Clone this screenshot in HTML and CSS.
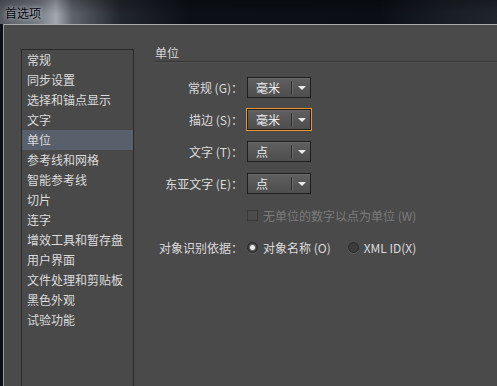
FILE: index.html
```html
<!DOCTYPE html>
<html lang="zh-CN">
<head>
    <meta charset="UTF-8">
    <meta name="viewport" content="width=device-width, initial-scale=1.0">
    <title>首选项</title>
    <link rel="stylesheet" href="styles.css">
</head>
<body>
    <div class="titlebar">
        <span class="title">首选项</span>
    </div>

    <div class="dialog">
        <ul class="nav">
            <li>常规</li>
            <li>同步设置</li>
            <li>选择和锚点显示</li>
            <li>文字</li>
            <li class="active">单位</li>
            <li>参考线和网格</li>
            <li>智能参考线</li>
            <li>切片</li>
            <li>连字</li>
            <li>增效工具和暂存盘</li>
            <li>用户界面</li>
            <li>文件处理和剪贴板</li>
            <li>黑色外观</li>
            <li>试验功能</li>
        </ul>

        <div class="panel">
            <div class="section-title">单位</div>

            <div class="form">
                <label class="field-label">常规 (G)：</label>
                <div class="select"><span class="value">毫米</span><span class="arrow"></span></div>

                <label class="field-label">描边 (S)：</label>
                <div class="select focus"><span class="value">毫米</span><span class="arrow"></span></div>

                <label class="field-label">文字 (T)：</label>
                <div class="select"><span class="value">点</span><span class="arrow"></span></div>

                <label class="field-label">东亚文字 (E)：</label>
                <div class="select"><span class="value">点</span><span class="arrow"></span></div>

                <div class="check-row disabled">
                    <span class="checkbox"></span>
                    <span>无单位的数字以点为单位 (W)</span>
                </div>

                <label class="field-label">对象识别依据：</label>
                <div class="radio-group">
                    <span class="radio-option"><span class="radio checked"></span>对象名称 (O)</span>
                    <span class="radio-option"><span class="radio"></span>XML ID(X)</span>
                </div>
            </div>
        </div>
    </div>
</body>
</html>
```

FILE: styles.css
```css
body {
    margin: 0;
    height: 386px;
    overflow: hidden;
    background: #0d1117;
    font-family: "Noto Sans CJK SC", "Liberation Sans", sans-serif;
    font-size: 12px;
    color: #dcdcdc;
}

.titlebar {
    height: 24px;
    display: flex;
    align-items: center;
    padding-left: 5px;
    background:
        linear-gradient(to bottom, rgba(0, 0, 0, 0.25), rgba(0, 0, 0, 0) 60%),
        linear-gradient(to right, #565b62 0, #7b8088 40px, #a3a8ae 56px, #60656c 72px, #22262d 120px, #0c1016 190px, #0b0f15 380px, #1a1f26 450px, #20252c 497px);
}

.title {
    color: #05070b;
    text-shadow: 0 0 4px rgba(225, 230, 236, 0.9);
}

.dialog {
    display: flex;
    height: 362px;
    margin-left: 3px;
    border-top: 1px solid #aaaaaa;
    border-left: 1px solid #9a9a9a;
    background: #4a4a4a;
}

.nav {
    list-style: none;
    margin: 24px 0 0 17px;
    padding: 0;
    width: 111px;
    border: 1px solid #292929;
    border-bottom: none;
    background: #494949;
}

.nav li {
    height: 20px;
    line-height: 20px;
    padding-left: 5px;
    white-space: nowrap;
}

.nav li.active {
    background: #58606b;
}

.panel {
    flex: 1;
    margin-left: 21px;
    padding-top: 20px;
}

.section-title {
    line-height: 16px;
    color: #d8d8d8;
    border-bottom: 1px solid #353535;
    box-shadow: 0 1px 0 #525252;
}

.form {
    display: grid;
    grid-template-columns: 88px auto;
    grid-auto-rows: 21px;
    column-gap: 4px;
    row-gap: 11px;
    align-items: center;
    margin-top: 15px;
}

.field-label {
    text-align: right;
    white-space: nowrap;
}

.select {
    width: 62px;
    height: 19px;
    display: flex;
    align-items: center;
    border: 1px solid #1e1e1e;
    background: linear-gradient(#5f5f5f, #4e4e4e);
    box-shadow: inset 0 1px 0 #686868;
    color: #ececec;
}

.select.focus {
    outline: 1px solid #f0952b;
}

.select .value {
    flex: 1;
    padding-left: 8px;
    line-height: 19px;
}

.select .arrow {
    width: 18px;
    height: 13px;
    display: flex;
    align-items: center;
    justify-content: center;
    border-left: 1px solid #2e2e2e;
    box-shadow: inset 1px 0 0 #6a6a6a;
}

.select .arrow::after {
    content: "";
    border-left: 4px solid transparent;
    border-right: 4px solid transparent;
    border-top: 4px solid #eeeeee;
    margin-left: 1px;
}

.check-row {
    grid-column: 2;
    display: flex;
    align-items: center;
    gap: 5px;
    white-space: nowrap;
}

.check-row.disabled {
    color: #7b7b7b;
}

.checkbox {
    width: 9px;
    height: 9px;
    border: 1px solid #3a3a3a;
    background: #4c4c4c;
}

.radio-group {
    display: flex;
    align-items: center;
    gap: 17px;
    white-space: nowrap;
}

.radio-option {
    display: flex;
    align-items: center;
    gap: 5px;
}

.radio {
    width: 9px;
    height: 9px;
    border-radius: 50%;
    border: 1px solid #2a2a2a;
    background: #3c3c3c;
    box-shadow: 0 1px 0 #5a5a5a;
}

.radio.checked {
    background: radial-gradient(circle, #f0f0f0 0, #e8e8e8 2px, #6a6a6a 3px, #3c3c3c 4px);
}
```
